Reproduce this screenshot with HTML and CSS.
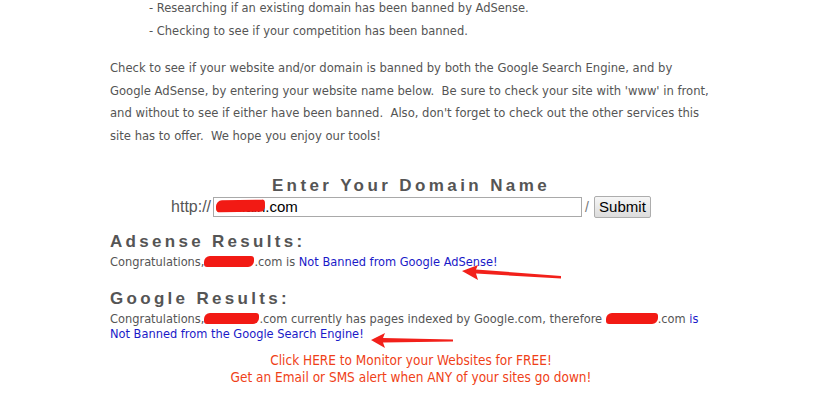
FILE: index.html
```html
<!DOCTYPE html>
<html>
<head>
<meta charset="utf-8">
<link rel="stylesheet" href="styles.css">
</head>
<body>
<div class="page">
  <ul class="uses">
    <li>- Researching if an existing domain has been banned by AdSense.</li>
    <li>- Checking to see if your competition has been banned.</li>
  </ul>
  <p class="intro">Check to see if your website and/or domain is banned by both the Google Search Engine, and by Google AdSense, by entering your website name below.&nbsp; Be sure to check your site with 'www' in front, and without to see if either have been banned.&nbsp; Also, don't forget to check out the other services this site has to offer.&nbsp; We hope you enjoy our tools!</p>

  <div class="tool">
    <h2 class="title">Enter Your Domain Name</h2>
    <form class="domain-form">
      <span class="label">http://</span>
      <span class="field">
        <input class="domain-input" type="text" value="domain.com">
        <span class="scribble scribble-input"></span>
      </span>
      <span class="slash">/</span>
      <button class="submit" type="button">Submit</button>
    </form>

    <div class="results">
      <h3 class="result-title">Adsense Results:</h3>
      <div class="result-text">Congratulations,<span class="blob b1"></span>.com is <a class="ok">Not Banned from Google AdSense!</a></div>

      <h3 class="result-title google">Google Results:</h3>
      <div class="result-text">Congratulations,<span class="blob b2"></span>.com currently has pages indexed by Google.com, therefore <span class="blob b3"></span>.com <span class="ok">is</span> <a class="ok">Not Banned from the Google Search Engine!</a></div>

      <svg class="arrow arrow-1" width="110" height="24" viewBox="0 0 110 24">
        <path d="M0 10 L16 4 L14 8.5 L99 15 L99 17.5 L14 12.5 L16 19 Z" fill="#f2201a"/>
      </svg>
      <svg class="arrow arrow-2" width="90" height="22" viewBox="0 0 90 22">
        <path d="M0 11 L14 4 L12 9 L82 10.5 L82 12.5 L12 13.5 L14 19 Z" fill="#f2201a"/>
      </svg>
    </div>

    <a class="promo">Click HERE to Monitor your Websites for FREE!<br>Get an Email or SMS alert when ANY of your sites go down!</a>
  </div>
</div>
</body>
</html>
```

FILE: styles.css
```css
html, body {
  margin: 0;
  padding: 0;
  background: #ffffff;
}
body {
  font-family: "DejaVu Sans Condensed", "DejaVu Sans", sans-serif;
  font-size: 12.9px;
  color: #555555;
}
.page {
  margin-left: 110px;
  width: 602px;
}
.uses {
  list-style: none;
  margin: -4px 0 0 39px;
  padding: 0;
  font-size: 12.75px;
  line-height: 23px;
}
.intro {
  margin: 15px 0 0;
  line-height: 22.5px;
}
.tool {
  width: 602px;
  margin-top: 29px;
}
.title {
  margin: 0;
  text-align: center;
  font-family: "Liberation Sans", Arial, sans-serif;
  font-weight: bold;
  font-size: 17px;
  letter-spacing: 3.4px;
  line-height: 20px;
  color: #555555;
}
.domain-form {
  display: flex;
  align-items: center;
  justify-content: center;
  margin: -1px 0 0;
  height: 23px;
  font-family: "Liberation Sans", Arial, sans-serif;
  font-size: 15px;
  color: #555555;
}
.label {
  margin-right: 2px;
  font-size: 16px;
}
.field {
  position: relative;
  display: inline-block;
  height: 20px;
}
.domain-input {
  box-sizing: border-box;
  width: 369px;
  height: 20px;
  margin: 0;
  padding: 0 2px;
  border: 1px solid #a9a9a9;
  font-family: "Liberation Sans", Arial, sans-serif;
  font-size: 15px;
  color: #000;
}
.scribble {
  position: absolute;
  background: #f21a14;
  border-radius: 6px 3px 5px 4px;
}
.scribble-input {
  left: 3px;
  top: 3px;
  width: 49px;
  height: 12px;
  transform: rotate(-1deg);
}
.slash {
  margin: 0 5px 0 3px;
  color: #777;
  font-size: 14px;
}
.submit {
  box-sizing: border-box;
  height: 22px;
  width: 57px;
  padding: 0 4px;
  border: 1px solid #adadad;
  border-radius: 2px;
  background: linear-gradient(#f6f6f6, #dcdcdc);
  font-family: "Liberation Sans", Arial, sans-serif;
  font-size: 15px;
  color: #000;
}
.results {
  position: relative;
  margin-top: 14px;
}
.result-title {
  margin: 0;
  font-family: "Liberation Sans", Arial, sans-serif;
  font-weight: bold;
  font-size: 17px;
  letter-spacing: 3.3px;
  line-height: 20px;
  color: #555555;
}
.result-title.google {
  margin-top: 19px;
}
.result-text {
  padding-top: 2px;
  font-size: 12.7px;
  line-height: 15.5px;
}
.ok {
  color: #1a1ac8;
}
.blob {
  display: inline-block;
  height: 11px;
  background: #f21a14;
  border-radius: 6px 3px 6px 3px;
  vertical-align: -1px;
}
.b1 { width: 50px; }
.b2 { width: 55px; }
.b3 { width: 52px; }
.arrow {
  position: absolute;
}
.arrow-1 {
  left: 352px;
  top: 29px;
}
.arrow-2 {
  left: 261px;
  top: 97px;
}
.promo {
  display: block;
  margin-top: 10px;
  text-align: center;
  color: #ef3f18;
  line-height: 17px;
  font-size: 13.5px;
}
```
